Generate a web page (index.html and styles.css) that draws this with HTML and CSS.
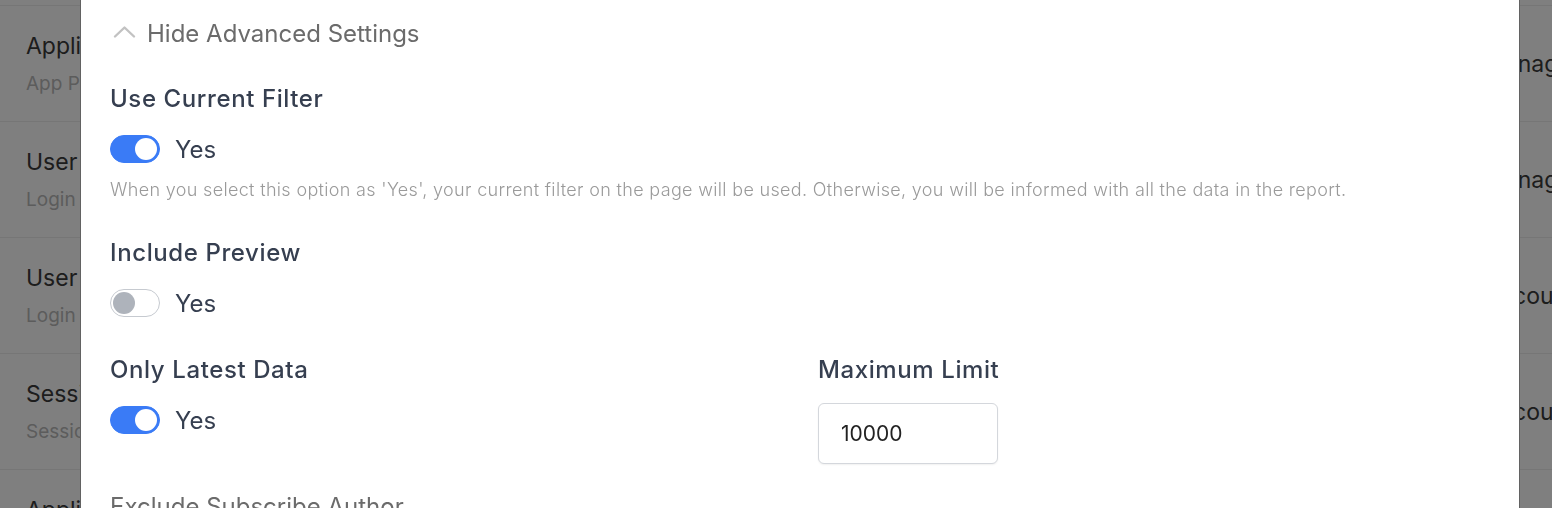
FILE: index.html
```html
<!DOCTYPE html>
<html lang="en">
<head>
    <meta charset="UTF-8">
    <meta name="viewport" content="width=device-width, initial-scale=1.0">
    <title>Report Subscriptions</title>
    <link rel="stylesheet" href="styles.css">
</head>
<body>
    <!-- page behind the modal -->
    <div class="report-list">
        <div class="report-row">
            <div class="report-info">
                <div class="report-title">Application Usage</div>
                <div class="report-sub">App Performance Report</div>
            </div>
            <div class="report-owner">Management</div>
        </div>
        <div class="report-row">
            <div class="report-info">
                <div class="report-title">User Activity</div>
                <div class="report-sub">Login History</div>
            </div>
            <div class="report-owner">Management</div>
        </div>
        <div class="report-row">
            <div class="report-info">
                <div class="report-title">User Logins</div>
                <div class="report-sub">Login Attempts</div>
            </div>
            <div class="report-owner">Accounting</div>
        </div>
        <div class="report-row">
            <div class="report-info">
                <div class="report-title">Sessions</div>
                <div class="report-sub">Session Duration</div>
            </div>
            <div class="report-owner">Accounting</div>
        </div>
        <div class="report-row">
            <div class="report-info">
                <div class="report-title">Application Errors</div>
                <div class="report-sub">Error Log</div>
            </div>
            <div class="report-owner">Management</div>
        </div>
    </div>

    <div class="backdrop"></div>

    <div class="modal">
        <div class="modal-body">
            <button class="advanced-toggle" type="button">
                <svg class="chevron" width="24" height="14" viewBox="0 0 24 14">
                    <polyline points="2,11.5 11.5,2.5 21,11.5" fill="none" stroke="#c2c2c2" stroke-width="2.4" stroke-linecap="round" stroke-linejoin="round"/>
                </svg>
                Hide Advanced Settings
            </button>

            <div class="field">
                <div class="field-label">Use Current Filter</div>
                <label class="switch-row">
                    <span class="switch is-on"><span class="knob"></span></span>
                    <span class="switch-text">Yes</span>
                </label>
                <p class="field-help">When you select this option as 'Yes', your current filter on the page will be used. Otherwise, you will be informed with all the data in the report.</p>
            </div>

            <div class="field">
                <div class="field-label">Include Preview</div>
                <label class="switch-row">
                    <span class="switch"><span class="knob"></span></span>
                    <span class="switch-text">Yes</span>
                </label>
            </div>

            <div class="field-grid">
                <div class="field">
                    <div class="field-label">Only Latest Data</div>
                    <label class="switch-row">
                        <span class="switch is-on"><span class="knob"></span></span>
                        <span class="switch-text">Yes</span>
                    </label>
                </div>
                <div class="field">
                    <div class="field-label">Maximum Limit</div>
                    <input class="text-input" type="text" value="10000">
                </div>
            </div>

            <div class="field field-muted">
                <div class="field-label">Exclude Subscribe Author</div>
            </div>
        </div>
    </div>
</body>
</html>
```

FILE: styles.css
```css
:root {
    --text-primary: #363f50;
    --text-muted: #6b6b6b;
    --text-help: #9a9a9a;
    --accent: #3a7bf6;
    --border-color: #d4d7dc;
}

body {
    font-family: 'Inter', 'Noto Sans', sans-serif;
    margin: 0;
    background: #fff;
    height: 508px;
    overflow: hidden;
}

/* --- page behind --- */
.report-list { padding-top: 5px; overflow: hidden; }
.report-row {
    display: flex; justify-content: space-between; align-items: center;
    height: 116px; box-sizing: border-box;
    border-top: 1px solid #ececec;
    padding: 0 26px;
}
.report-info { display: flex; flex-direction: column; gap: 12px; }
.report-title { font-size: 23px; line-height: 28px; color: #3a3a3a; }
.report-sub { font-size: 19px; line-height: 24px; color: #b9b9b9; }
.report-owner { font-size: 23px; color: #3a3a3a; width: 42px; flex-shrink: 0; white-space: nowrap; }

.backdrop { position: fixed; inset: 0; background: rgba(0, 0, 0, 0.5); }

/* --- modal --- */
.modal {
    position: fixed; top: 0; bottom: 0; left: 81px; right: 33px;
    background: #fff;
    box-shadow: -1px 0 0 #626262, 1px 0 0 #626262;
}
.modal-body { padding: 20px 29px 0; }

.advanced-toggle {
    display: flex; align-items: center; gap: 10px;
    border: none; background: none; padding: 0; margin-left: 3px;
    font-family: inherit; font-size: 24px; line-height: 28px; color: var(--text-muted);
    cursor: pointer;
}
.chevron { margin-top: -4px; }

.field { margin-top: 37px; display: flex; flex-direction: column; align-items: flex-start; }
.field-label {
    font-size: 24px; line-height: 28px; font-weight: 500; letter-spacing: 0.6px;
    color: var(--text-primary); margin-bottom: 20px;
}

.switch-row { display: flex; align-items: center; gap: 15px; height: 32px; cursor: pointer; }
.switch {
    width: 50px; height: 28px; box-sizing: border-box; border-radius: 14px;
    border: 1px solid #c6cad0; background: #fff;
    display: flex; align-items: center; padding: 0 2px;
}
.switch .knob { width: 22px; height: 22px; border-radius: 50%; background: #aeb3bb; }
.switch.is-on { background: var(--accent); border-color: var(--accent); justify-content: flex-end; }
.switch.is-on .knob { background: #fff; }
.switch-text { font-size: 24px; color: var(--text-primary); }

.field-help {
    margin: 13px 0 0; font-size: 18px; line-height: 24px; font-weight: 300;
    letter-spacing: 0.33px; color: var(--text-help);
}

.field-grid { display: grid; grid-template-columns: 1fr 1fr; column-gap: 36px; }
.field-grid .field { margin-top: 37px; }

.text-input {
    width: 180px; height: 61px; box-sizing: border-box; margin-top: -1px;
    border: 1px solid var(--border-color); border-radius: 6px;
    box-shadow: 0 1px 2px rgb(0 0 0 / 0.06);
    padding: 0 22px; font-family: inherit; font-size: 21px; color: #222;
    outline: none;
}

.field-muted { margin-top: 29px; }
.field-muted .field-label { font-weight: 400; letter-spacing: 0; color: var(--text-muted); }
```
